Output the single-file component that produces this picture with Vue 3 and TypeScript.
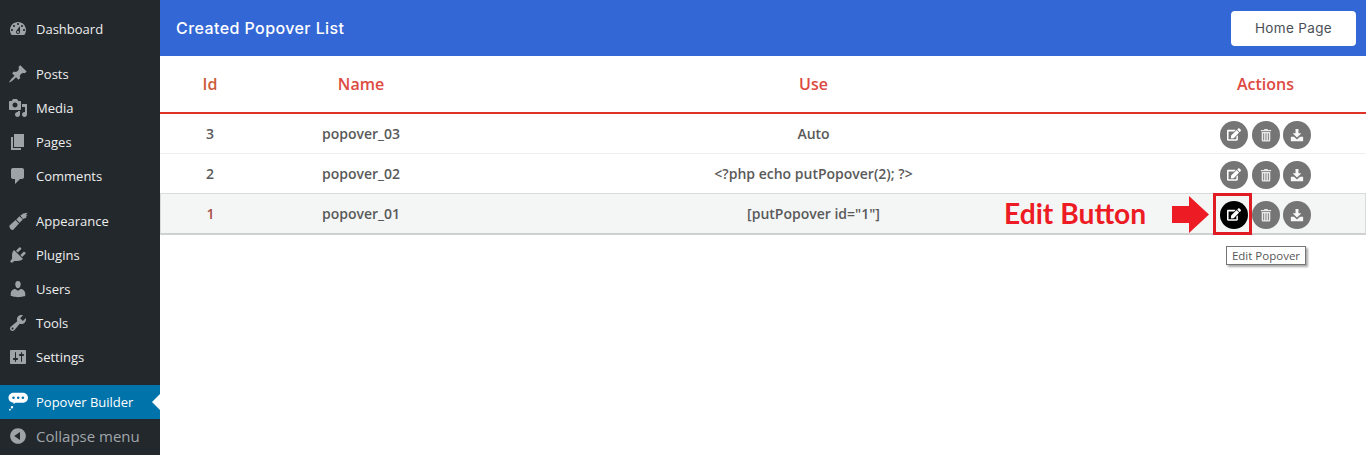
<script setup lang="ts">
interface MenuItem { label: string; path: string; gap?: boolean; active?: boolean; muted?: boolean }
const menu: MenuItem[] = [
  { label: 'Dashboard', path: 'M3.76 16h12.48c1.1-1.37 1.76-3.11 1.76-5 0-4.42-3.58-8-8-8s-8 3.58-8 8c0 1.89.66 3.63 1.76 5zM10 4c.55 0 1 .45 1 1s-.45 1-1 1-1-.45-1-1 .45-1 1-1zM6 6c.55 0 1 .45 1 1s-.45 1-1 1-1-.45-1-1 .45-1 1-1zm8 0c.55 0 1 .45 1 1s-.45 1-1 1-1-.45-1-1 .45-1 1-1zm-5.37 5.55L12 7v6c0 1.1-.9 2-2 2s-2-.9-2-2c0-.57.24-1.08.63-1.45zM4 10c.55 0 1 .45 1 1s-.45 1-1 1-1-.45-1-1 .45-1 1-1zm12 0c.55 0 1 .45 1 1s-.45 1-1 1-1-.45-1-1 .45-1 1-1zm-5 3c0-.55-.45-1-1-1s-1 .45-1 1 .45 1 1 1 1-.45 1-1z' },
  { label: 'Posts', gap: true, path: 'M10.44 3.02l1.82-1.82 6.36 6.35-1.83 1.82c-1.05-.68-2.48-.57-3.41.36l-.75.75c-.92.93-1.04 2.35-.35 3.41l-1.83 1.82-2.41-2.41-2.8 2.79c-.42.42-3.38 2.71-3.8 2.29s1.86-3.39 2.28-3.81l2.79-2.79L4.1 9.36l1.83-1.82c1.05.69 2.48.57 3.4-.36l.75-.75c.93-.92 1.05-2.35.36-3.41z' },
  { label: 'Media', path: 'M13 11V4c0-.55-.45-1-1-1h-1.67L9 1H5L3.67 3H2c-.55 0-1 .45-1 1v7c0 .55.45 1 1 1h10c.55 0 1-.45 1-1zM7 4.500c1.38 0 2.500 1.120 2.500 2.500S8.380 9.500 7 9.500 4.500 8.380 4.500 7 5.620 4.500 7 4.500zM14 6h5v10.500c0 1.380-1.120 2.500-2.500 2.500S14 17.880 14 16.500s1.120-2.500 2.500-2.500c.17 0 .34.020.5.050V9h-3V6zm-4 8.050V13h2v3.500c0 1.380-1.120 2.500-2.500 2.500S7 17.880 7 16.500 8.120 14 9.500 14c.17 0 .34.020.5.050z' },
  { label: 'Pages', path: 'M6 15V2h10v13H6zm-1 1h8v2H3V5h2v11z' },
  { label: 'Comments', path: 'M5 2h9c1.100 0 2 .9 2 2v7c0 1.100-.9 2-2 2h-2l-5 5v-5H5c-1.100 0-2-.9-2-2V4c0-1.100.9-2 2-2z' },
  { label: 'Appearance', gap: true, path: 'M1.500 14.500L7.500 9l3.500 3.500-5.500 6c-.8.8-1.800.6-2.700-.3-.9-.9-1.700-2.700-1.300-3.700zM8.300 8.400l3.200-3.200 3.300 3.300-3.200 3.200zM12.300 4.400L15.300 2.500l4.400-.8-2 2.500 1.800.1-1.700 1.700 1 .5-3.900 1.500z' },
  { label: 'Plugins', path: 'M13.110 4.360L9.870 7.600 8 5.730l3.240-3.240c.35-.34 1.050-.2 1.560.32.52.51.66 1.210.31 1.550zm-8 1.770l.91-1.120 9.010 9.010-1.190.84c-.71.71-2.630 1.160-3.820 1.160H6.140L4.900 17.260c-.59.59-1.540.59-2.120 0-.59-.58-.59-1.530 0-2.120l1.240-1.240v-3.880c0-1.130.4-3.190 1.090-3.890zm7.260 3.970l3.240-3.240c.34-.35 1.040-.21 1.550.31.52.51.66 1.210.31 1.550l-3.240 3.250z' },
  { label: 'Users', path: 'M10 9.250c-2.270 0-2.730-3.440-2.730-3.440C7 4.020 7.820 2 9.970 2c2.160 0 2.980 2.020 2.710 3.810 0 0-.41 3.440-2.680 3.440zm0 2.570L12.720 10c2.390 0 4.520 2.330 4.520 4.530v2.490s-3.650 1.130-7.240 1.130c-3.650 0-7.240-1.130-7.240-1.130v-2.490c0-2.250 1.940-4.480 4.470-4.480z' },
  { label: 'Tools', path: 'M16.680 9.770c-1.340 1.340-3.300 1.670-4.950.99l-5.410 6.520c-.99.99-2.590.99-3.580 0s-.99-2.590 0-3.570l6.520-5.420c-.68-1.650-.35-3.610.99-4.950 1.280-1.280 3.120-1.620 4.720-1.060l-2.890 2.890 2.820 2.820 2.860-2.870c.53 1.580.18 3.390-1.080 4.650zM3.810 16.210c.4.39 1.040.39 1.430 0 .4-.4.4-1.040 0-1.430-.39-.4-1.030-.4-1.430 0-.39.39-.39 1.030 0 1.430z' },
  { label: 'Settings', path: 'M18 16V4c0-.55-.45-1-1-1H3c-.55 0-1 .45-1 1v12c0 .55.45 1 1 1h14c.55 0 1-.45 1-1zM8 11h1c.55 0 1 .45 1 1s-.45 1-1 1H8v1.500c0 .28-.22.5-.5.5s-.5-.22-.5-.5V13H6c-.55 0-1-.45-1-1s.45-1 1-1h1V5.500c0-.28.22-.5.5-.5s.5.22.5.5V11zm5-2h-1c-.55 0-1-.45-1-1s.45-1 1-1h1V5.500c0-.28.22-.5.5-.5s.5.22.5.5V7h1c.55 0 1 .45 1 1s-.45 1-1 1h-1v5.500c0 .28-.22.5-.5.5s-.5-.22-.5-.5V9z' },
  { label: 'Popover Builder', gap: true, active: true, path: 'M6 .8h8.500c3 0 5.500 2 5.500 5s-2.500 5-5.500 5H7.500l-2.300 1.400.6-1.500C2.800 10.500.5 8.800.5 5.800s2.500-5 5.500-5zM5.500 4.500a1.300 1.300 0 1 0 0 2.600 1.300 1.300 0 0 0 0-2.600zm4.700 0a1.300 1.300 0 1 0 0 2.600 1.300 1.300 0 0 0 0-2.600zm4.700 0a1.300 1.300 0 1 0 0 2.600 1.300 1.300 0 0 0 0-2.600zM4 14a1.200 1.200 0 1 1 0 2.400A1.200 1.200 0 0 1 4 14zM2 16.800a.9.9 0 1 1 0 1.800.9.9 0 0 1 0-1.800z' },
  { label: 'Collapse menu', muted: true, path: 'M10 2.160c4.330 0 7.840 3.510 7.840 7.840s-3.510 7.840-7.840 7.840S2.160 14.330 2.160 10 5.710 2.160 10 2.160zm2 11.720V6.120L6.180 9.970z' },
]

interface Row { id: number; name: string; use: string; hover?: boolean }
const rows: Row[] = [
  { id: 3, name: 'popover_03', use: 'Auto' },
  { id: 2, name: 'popover_02', use: '<?php echo putPopover(2); ?>' },
  { id: 1, name: 'popover_01', use: '[putPopover id="1"]', hover: true },
]
const editPath = 'M402.6 83.2l90.2 90.2c3.8 3.8 3.8 10 0 13.8L274.4 405.6l-92.8 10.3c-12.4 1.4-22.9-9.1-21.5-21.5l10.3-92.8L388.8 83.2c3.8-3.8 10-3.8 13.8 0zm162-22.9l-48.8-48.8c-15.2-15.2-39.9-15.2-55.2 0l-35.4 35.4c-3.8 3.8-3.8 10 0 13.8l90.2 90.2c3.8 3.8 10 3.8 13.8 0l35.4-35.4c15.2-15.3 15.2-40 0-55.2zM384 346.2V448H64V128h229.8c3.2 0 6.2-1.3 8.5-3.5l40-40c7.6-7.6 2.2-20.5-8.5-20.5H48C21.5 64 0 85.5 0 112v352c0 26.5 21.5 48 48 48h352c26.5 0 48-21.5 48-48V306.2c0-10.7-12.9-16-20.5-8.5l-40 40c-2.2 2.3-3.5 5.3-3.5 8.5z'
</script>

<template>
  <div class="page">
    <aside class="sidebar">
      <a
        v-for="item in menu"
        :key="item.label"
        class="menu-item"
        :class="{ gap: item.gap, active: item.active, muted: item.muted }"
      >
        <svg class="menu-icon" viewBox="0 0 20 20"><path :d="item.path" fill-rule="evenodd" /></svg>
        <span>{{ item.label }}</span>
      </a>
    </aside>

    <main class="content">
      <header class="topbar">
        <h1>Created Popover List</h1>
        <button class="home">Home Page</button>
      </header>

      <div class="grid head">
        <div>Id</div>
        <div>Name</div>
        <div>Use</div>
        <div>Actions</div>
      </div>

      <div v-for="row in rows" :key="row.id" class="grid row" :class="{ hover: row.hover }">
        <div>{{ row.id }}</div>
        <div>{{ row.name }}</div>
        <div>{{ row.use }}</div>
        <div class="actions">
          <span class="circle" :class="{ black: row.hover }">
            <svg class="fa-edit" viewBox="0 0 576 512"><path :d="editPath" /></svg>
          </span>
          <span class="circle">
            <svg class="fa-trash" viewBox="0 0 14 16">
              <path d="M1 2.200h3.500L5.300 1h3.400l.8 1.200H13v1.300H1zM2 4.500h10v10c0 .6-.5 1-1 1H3c-.5 0-1-.4-1-1zm1.800 1.500v8h1V6zm2.700 0v8h1V6zm2.700 0v8h1V6z" fill-rule="evenodd" />
            </svg>
          </span>
          <span class="circle">
            <svg class="fa-down" viewBox="0 0 16 16"><path d="M6.300 1h3.400v5H13L8 10.800 3 6h3.300zM1 10h3.600L8 13.200 11.400 10H15v5H1z" /></svg>
          </span>
        </div>

        <template v-if="row.hover">
          <span class="note">Edit Button</span>
          <svg class="arrow" viewBox="0 0 37 37"><path d="M0 10h17V0l20 18.500L17 37V27H0z" /></svg>
          <span class="focus-box"></span>
          <span class="tip">Edit Popover</span>
        </template>
      </div>
    </main>
  </div>
</template>

<style>
html, body { margin: 0; background: #fff; overflow: hidden; }
</style>

<style scoped>
.page {
  display: flex;
  height: 455px;
  overflow: hidden;
  font-family: "Open Sans", "Liberation Sans", sans-serif;
}
.sidebar {
  width: 160px;
  flex: none;
  box-sizing: border-box;
  padding-top: 12px;
  background: #23282d;
  display: flex;
  flex-direction: column;
}
.menu-item {
  position: relative;
  height: 34px;
  display: flex;
  align-items: center;
  gap: 8px;
  padding-left: 8px;
  color: #eee;
  font-size: 13px;
}
.menu-item.gap { margin-top: 11px; }
.menu-icon { width: 20px; height: 20px; fill: #9ea3a8; flex: none; }
.menu-item.active { background: #0073aa; color: #fff; }
.menu-item.active .menu-icon { fill: #fff; }
.menu-item.active::after {
  content: "";
  position: absolute;
  right: 0;
  top: 9px;
  border: 8px solid transparent;
  border-right-color: #fff;
  border-left-width: 0;
}
.menu-item.muted { color: #a0a5aa; font-size: 15px; }
.content { flex: 1; min-width: 0; }
.topbar {
  height: 56px;
  box-sizing: border-box;
  padding: 0 10px 0 16px;
  background: #3367d6;
  display: flex;
  align-items: center;
  justify-content: space-between;
}
.topbar h1 {
  margin: 0;
  color: #fff;
  font-family: Inter, "Open Sans", sans-serif;
  font-size: 16px;
  font-weight: 500;
  letter-spacing: .42px;
}
.home {
  width: 125px;
  height: 35px;
  padding: 0;
  border: 0;
  border-radius: 4px;
  background: #fff;
  color: #4a4f57;
  font-family: Inter, "Open Sans", sans-serif;
  font-size: 13.500px;
  letter-spacing: .35px;
}
.grid {
  position: relative;
  display: grid;
  grid-template-columns: 100px 202px 703px 201px;
  align-items: center;
  text-align: center;
}
.head {
  height: 58px;
  box-sizing: border-box;
  border-bottom: 2px solid #dd3226;
  color: #dd4a42;
  font-size: 16px;
  font-weight: 600;
}
.head > div:first-child { color: #cc5c38; }
.row {
  height: 40px;
  box-sizing: border-box;
  border-bottom: 1px solid #eceeef;
  color: #5a5a5a;
  font-size: 14px;
  font-weight: 600;
}
.row.hover {
  height: 42px;
  margin-top: -1px;
  background: #f4f6f6;
  border: 1px solid #d9dbdb;
  border-bottom: 2px solid #cfd1d1;
  grid-template-columns: 99px 202px 703px 201px;
}
.row.hover > div:first-child { color: #a85048; }
.actions { display: flex; justify-content: center; gap: 3.500px; padding-top: 2px; }
.circle {
  width: 28px;
  height: 28px;
  border-radius: 50%;
  background: #757575;
  display: flex;
  align-items: center;
  justify-content: center;
}
.circle.black { background: #000; }
.circle svg { fill: #fff; }
.fa-edit { width: 14px; height: 13px; }
.fa-trash { width: 12px; height: 14px; opacity: .85; }
.fa-down { width: 14px; height: 14px; opacity: .95; }
.note {
  position: absolute;
  left: 843px;
  top: 2px;
  color: #ed1c24;
  font-family: Lato, sans-serif;
  font-size: 28.200px;
  font-weight: 700;
  white-space: nowrap;
}
.arrow { position: absolute; left: 1011px; top: 2px; width: 37px; height: 37px; fill: #ed1c24; }
.focus-box {
  position: absolute;
  left: 1052px;
  top: -1px;
  width: 39px;
  height: 42px;
  box-sizing: border-box;
  border: 3px solid #e01b24;
}
.tip {
  position: absolute;
  left: 1065px;
  top: 52px;
  width: 80px;
  height: 19px;
  box-sizing: border-box;
  border: 1px solid #767676;
  background: #fff;
  color: #575757;
  font-size: 11.500px;
  font-weight: 400;
  line-height: 17px;
  box-shadow: 2px 2px 2px #aaa;
}
</style>
